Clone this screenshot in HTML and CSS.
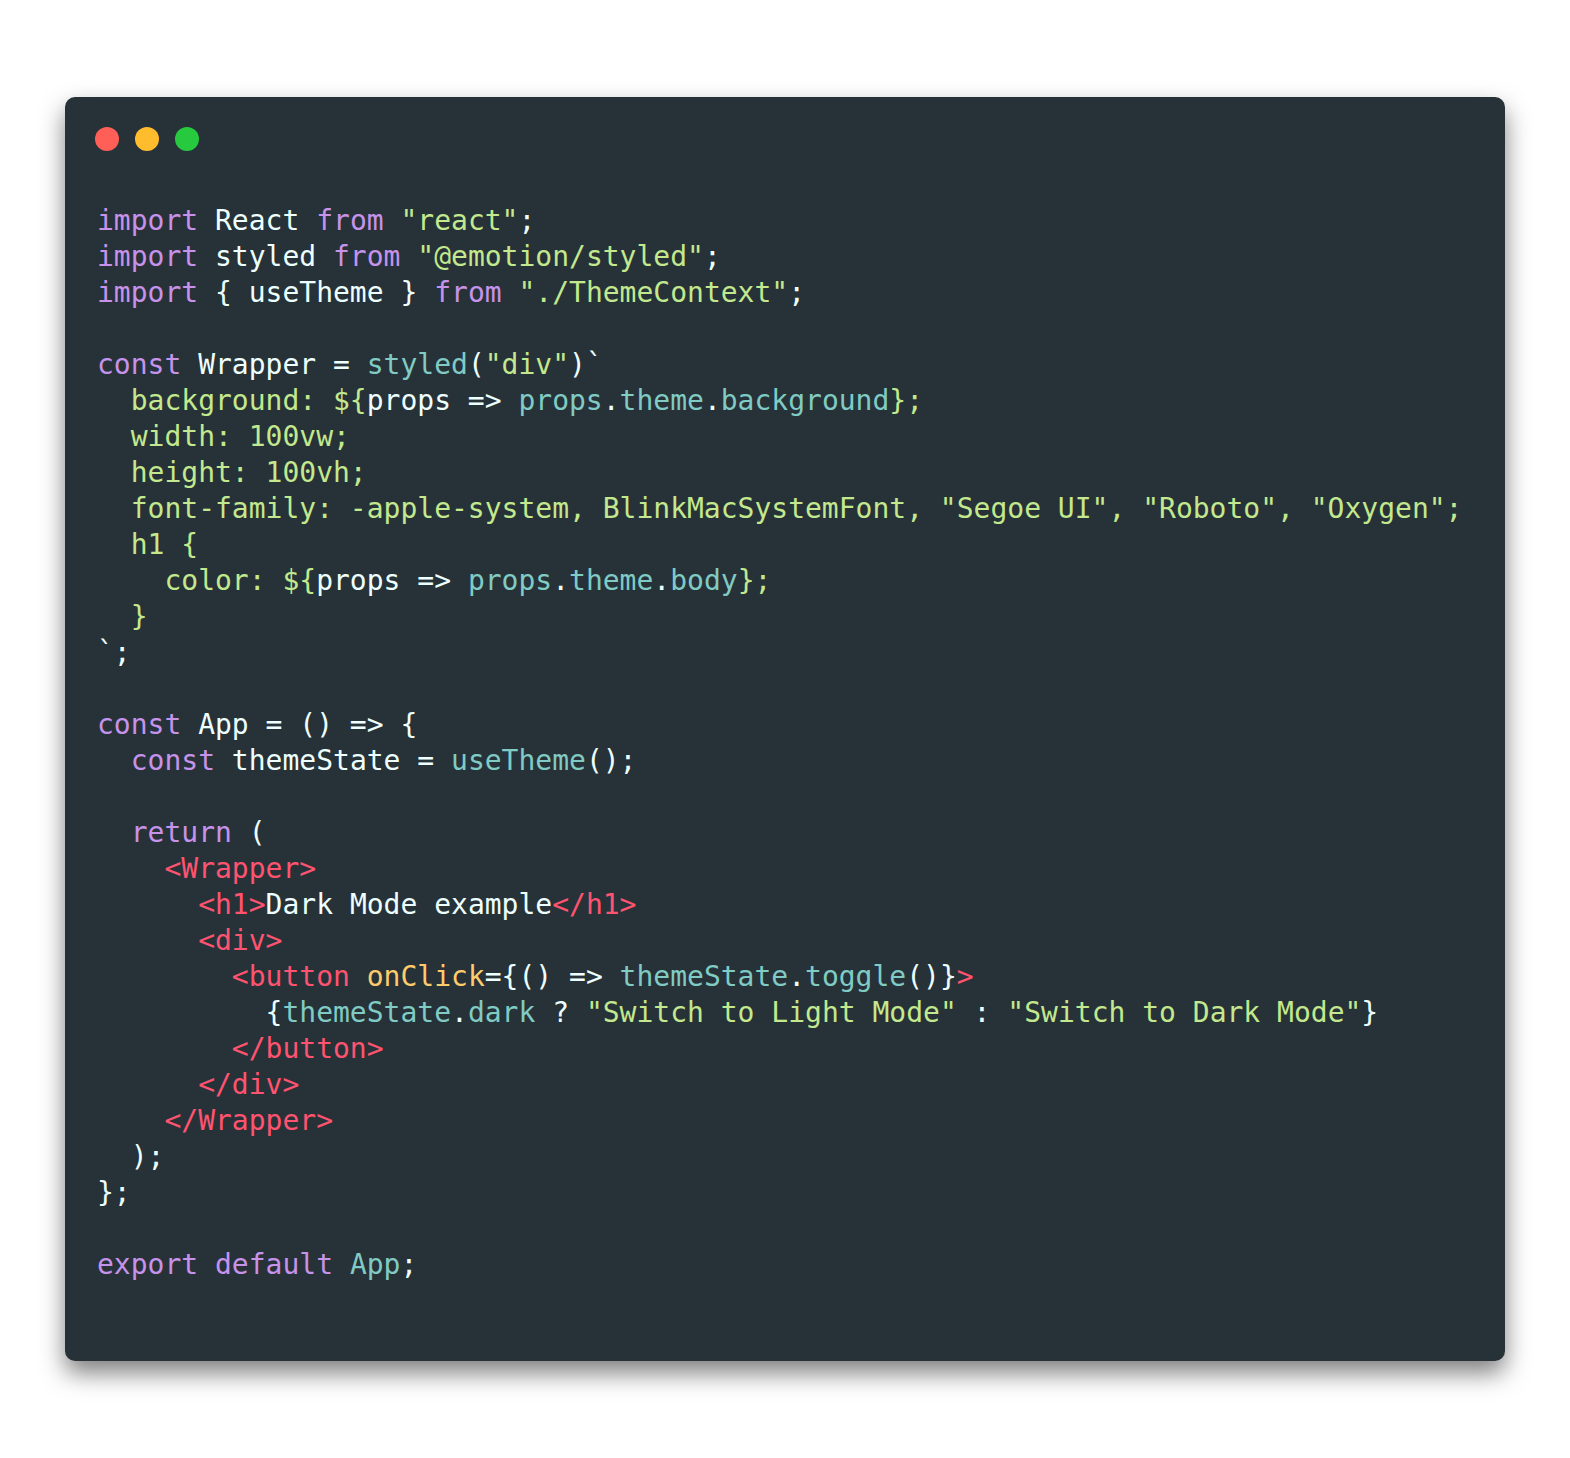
FILE: index.html
```html
<!DOCTYPE html>
<html lang="en">
<head>
<meta charset="utf-8">
<title>Code</title>
<link rel="stylesheet" href="styles.css">
</head>
<body>
<div class="frame">
  <div class="window">
    <div class="controls">
      <span class="dot red"></span>
      <span class="dot yellow"></span>
      <span class="dot green"></span>
    </div>
<pre class="code"><span class="k">import</span> React <span class="k">from</span> <span class="s">"react"</span>;
<span class="k">import</span> styled <span class="k">from</span> <span class="s">"@emotion/styled"</span>;
<span class="k">import</span> { useTheme } <span class="k">from</span> <span class="s">"./ThemeContext"</span>;

<span class="k">const</span> Wrapper = <span class="f">styled</span>(<span class="s">"div"</span>)`
<span class="s">  background: ${</span>props =&gt; <span class="f">props</span>.<span class="f">theme</span>.<span class="f">background</span><span class="s">};</span>
<span class="s">  width: 100vw;</span>
<span class="s">  height: 100vh;</span>
<span class="s">  font-family: -apple-system, BlinkMacSystemFont, "Segoe UI", "Roboto", "Oxygen";</span>
<span class="s">  h1 {</span>
<span class="s">    color: ${</span>props =&gt; <span class="f">props</span>.<span class="f">theme</span>.<span class="f">body</span><span class="s">};</span>
<span class="s">  }</span>
`;

<span class="k">const</span> App = () =&gt; {
  <span class="k">const</span> themeState = <span class="f">useTheme</span>();

  <span class="k">return</span> (
    <span class="t">&lt;Wrapper&gt;</span>
      <span class="t">&lt;h1&gt;</span>Dark Mode example<span class="t">&lt;/h1&gt;</span>
      <span class="t">&lt;div&gt;</span>
        <span class="t">&lt;button</span> <span class="a">onClick</span>={() =&gt; <span class="f">themeState</span>.<span class="f">toggle</span>()}<span class="t">&gt;</span>
          {<span class="f">themeState</span>.<span class="f">dark</span> ? <span class="s">"Switch to Light Mode"</span> : <span class="s">"Switch to Dark Mode"</span>}
        <span class="t">&lt;/button&gt;</span>
      <span class="t">&lt;/div&gt;</span>
    <span class="t">&lt;/Wrapper&gt;</span>
  );
};

<span class="k">export</span> <span class="k">default</span> <span class="f">App</span>;</pre>
  </div>
</div>
</body>
</html>
```

FILE: styles.css
```css
html, body {
  margin: 0;
  padding: 0;
  background: #ffffff;
}

.frame {
  padding: 97px 65px;
}

.window {
  background: #263238;
  border-radius: 10px;
  box-shadow: 0 12px 24px rgba(0, 0, 0, 0.5);
  padding: 30px 32px 78px 30px;
}

.controls {
  display: flex;
  gap: 16px;
  height: 24px;
}

.dot {
  width: 24px;
  height: 24px;
  border-radius: 50%;
  display: block;
}

.red { background: #ff5f56; }
.yellow { background: #ffbd2e; }
.green { background: #27c93f; }

.code {
  margin: 52px 0 0 2px;
  font-family: "DejaVu Sans Mono", monospace;
  font-size: 28px;
  line-height: 36px;
  color: #eeffff;
  white-space: pre;
}

.k { color: #c792ea; }
.s { color: #c3e88d; }
.f { color: #80cbc4; }
.t { color: #ff5370; }
.a { color: #ffcb6b; }
```
